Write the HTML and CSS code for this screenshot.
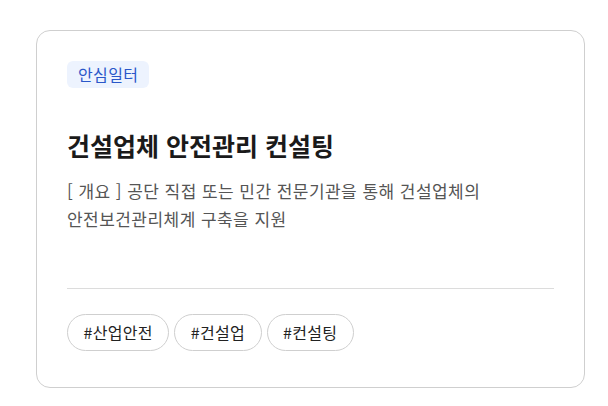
FILE: index.html
```html
<!DOCTYPE html>
<html lang="ko">
<head>
    <meta charset="UTF-8">
    <meta name="viewport" content="width=device-width, initial-scale=1.0">
    <title>건설업체 안전관리 컨설팅</title>
    <link rel="stylesheet" href="styles.css">
</head>
<body>

    <div class="card">
        <span class="badge">안심일터</span>

        <h2 class="card-title">건설업체 안전관리 컨설팅</h2>
        <p class="card-desc">[ 개요 ] 공단 직접 또는 민간 전문기관을 통해 건설업체의 안전보건관리체계 구축을 지원</p>

        <div class="card-footer">
            <span class="tag">#산업안전</span>
            <span class="tag">#건설업</span>
            <span class="tag">#컨설팅</span>
        </div>
    </div>

</body>
</html>
```

FILE: styles.css
```css
body {
    font-family: "Noto Sans CJK KR", "Noto Sans", sans-serif;
    background-color: #fff;
    color: #222;
    margin: 0;
    padding: 30px 23px 18px 36px;
}

.card {
    display: flex;
    flex-direction: column;
    align-items: flex-start;
    height: 358px;
    box-sizing: border-box;
    border: 1px solid #cfcfcf;
    border-radius: 14px;
    padding: 30px 30px 36px;
}

.badge {
    display: inline-block;
    background-color: #edf3fe;
    color: #2a57c9;
    font-size: 16px;
    letter-spacing: 0.4px;
    line-height: 27px;
    padding: 0 11px;
    border-radius: 6px;
}

.card-title {
    margin: 40px 0 0;
    font-size: 25px;
    font-weight: 700;
    line-height: 34px;
    color: #1a1a1a;
}

.card-desc {
    margin: 15px 0 0;
    font-size: 17px;
    letter-spacing: 0.45px;
    line-height: 28px;
    color: #555;
    word-break: keep-all;
}

.card-footer {
    margin-top: auto;
    align-self: stretch;
    display: flex;
    gap: 5px;
    border-top: 1px solid #dcdcdc;
    padding-top: 25px;
}

.tag {
    display: inline-block;
    border: 1px solid #cfcfcf;
    border-radius: 19px;
    padding: 0 15.5px;
    font-size: 16px;
    letter-spacing: 0.3px;
    line-height: 35px;
    color: #222;
}
```
